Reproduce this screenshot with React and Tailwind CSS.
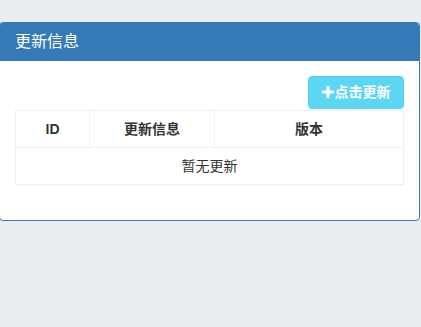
import React from "react";

export default function App() {
  return (
    <div
      className="w-[421px] h-[327px] bg-[#eaedf1] overflow-hidden pt-[22px]"
      style={{ fontFamily: '"Helvetica Neue", "Liberation Sans", "Noto Sans CJK SC", sans-serif' }}
    >
      <div className="ml-[-1px] w-[421px] bg-white border border-[#337ab7] rounded-[4px] overflow-hidden">
        <div className="h-[38px] bg-[#337ab7] px-[15px] flex items-center text-white text-[16px] leading-none">
          更新信息
        </div>
        <div className="p-[15px]">
          <div className="flex justify-end">
            <button className="w-[96px] h-[33px] bg-[#5bd6f3] border border-[#55d0ee] rounded-[4px] text-white text-[14px] font-bold flex items-center justify-center gap-[1px]">
              <svg width="12" height="12" viewBox="0 0 12 12" className="mt-[-1px]">
                <path d="M4.5 0h3v4.5H12v3H7.5V12h-3V7.5H0v-3h4.5z" fill="white" />
              </svg>
              <span>点击更新</span>
            </button>
          </div>
          <div className="mb-[20px] mt-[1px]">
            <table className="w-full border-collapse text-[14px] text-[#333]">
              <thead>
                <tr className="h-[37px]">
                  <th className="w-[74px] border border-[#f0f0f0] font-bold text-center">ID</th>
                  <th className="w-[125px] border border-[#f0f0f0] font-bold text-center">更新信息</th>
                  <th className="border border-[#f0f0f0] font-bold text-center">版本</th>
                </tr>
              </thead>
              <tbody>
                <tr className="h-[37px]">
                  <td colSpan={3} className="border border-[#f0f0f0] text-center">暂无更新</td>
                </tr>
              </tbody>
            </table>
          </div>
        </div>
      </div>
    </div>
  );
}
